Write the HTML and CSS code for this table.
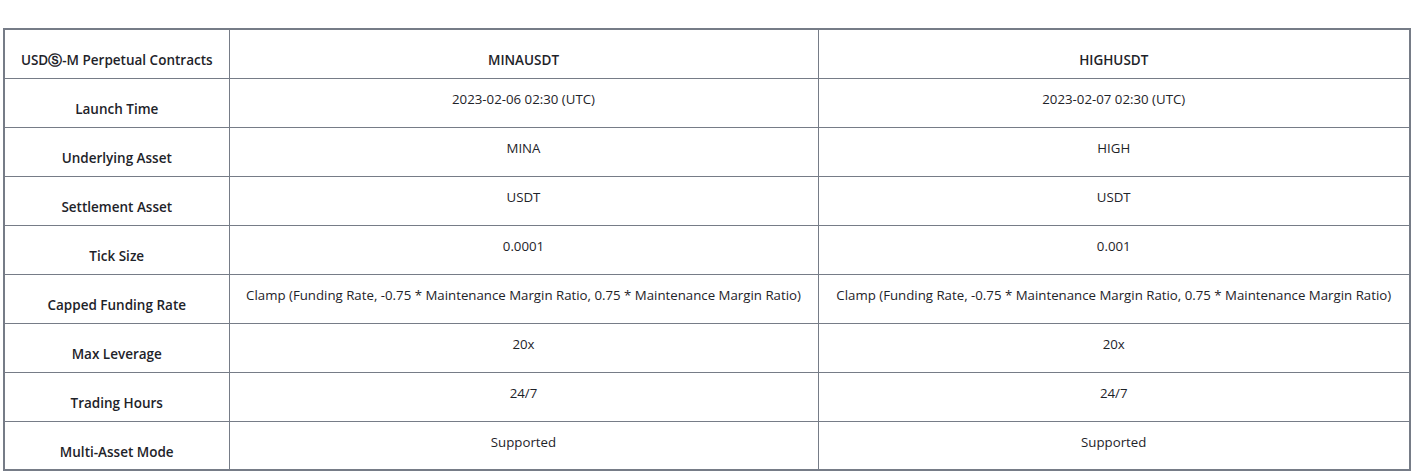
FILE: index.html
```html
<!DOCTYPE html>
<html>
<head>
<meta charset="utf-8">
<link rel="stylesheet" href="styles.css">
</head>
<body>
<div class="wrap">
<table class="spec">
<colgroup><col class="c1"><col class="c2"><col class="c3"></colgroup>
<tbody>
<tr class="head"><th class="label"><span>USDⓈ-M Perpetual Contracts</span></th><th class="val"><span>MINAUSDT</span></th><th class="val"><span>HIGHUSDT</span></th></tr>
<tr><th class="label"><span>Launch Time</span></th><td><span>2023-02-06 02:30 (UTC)</span></td><td><span>2023-02-07 02:30 (UTC)</span></td></tr>
<tr><th class="label"><span>Underlying Asset</span></th><td><span>MINA</span></td><td><span>HIGH</span></td></tr>
<tr><th class="label"><span>Settlement Asset</span></th><td><span>USDT</span></td><td><span>USDT</span></td></tr>
<tr><th class="label"><span>Tick Size</span></th><td><span>0.0001</span></td><td><span>0.001</span></td></tr>
<tr><th class="label"><span>Capped Funding Rate</span></th><td><span>Clamp (Funding Rate, -0.75 * Maintenance Margin Ratio, 0.75 * Maintenance Margin Ratio)</span></td><td><span>Clamp (Funding Rate, -0.75 * Maintenance Margin Ratio, 0.75 * Maintenance Margin Ratio)</span></td></tr>
<tr><th class="label"><span>Max Leverage</span></th><td><span>20x</span></td><td><span>20x</span></td></tr>
<tr><th class="label"><span>Trading Hours</span></th><td><span>24/7</span></td><td><span>24/7</span></td></tr>
<tr><th class="label"><span>Multi-Asset Mode</span></th><td><span>Supported</span></td><td><span>Supported</span></td></tr>
</tbody>
</table>
</div>
</body>
</html>
```
FILE: styles.css
```css
html, body { margin: 0; padding: 0; background: #ffffff; }
body { font-family: "Open Sans", "Noto Sans", sans-serif; color: #1e2329; }
.wrap { padding: 28px 5px 0 3px; }
.spec {
  width: 1406px;
  border-collapse: collapse;
  border: 2px solid #767c87;
  table-layout: fixed;
}
.c1 { width: 225px; }
.c2 { width: 589px; }
.c3 { width: 592px; }
.spec th, .spec td {
  border: 1px solid #767c87;
  height: 49px;
  padding: 0;
  text-align: center;
  vertical-align: top;
  box-sizing: border-box;
}
.spec th span, .spec td span { display: block; line-height: 20px; }
.spec td span { padding-top: 10px; font-size: 13.25px; font-weight: 400; }
.spec th.label span { padding-top: 20px; font-size: 13.5px; font-weight: 600; }
.spec tr.head th.val span { padding-top: 20px; font-size: 13.5px; font-weight: 600; }
```
